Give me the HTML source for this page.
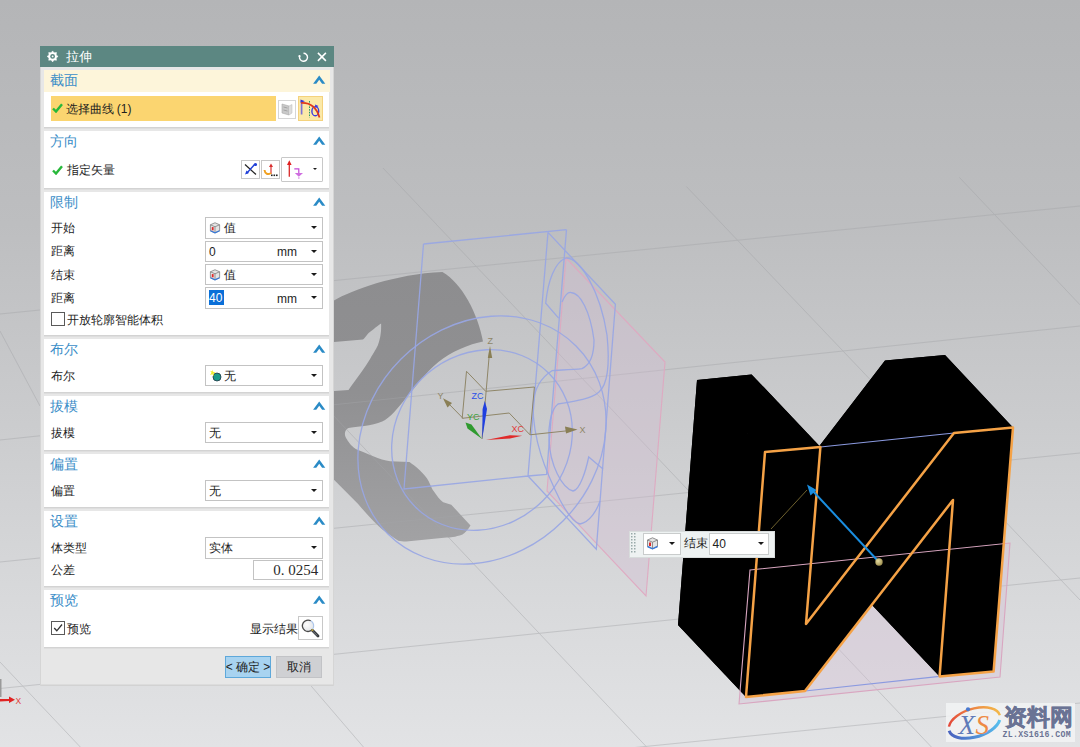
<!DOCTYPE html>
<html><head><meta charset="utf-8">
<style>
html,body{margin:0;padding:0;}
body{width:1080px;height:747px;position:relative;overflow:hidden;font-family:"Liberation Sans",sans-serif;
background:linear-gradient(180deg,#b4b5b7 0%,#bdbec0 30%,#cacbcd 55%,#d8d9db 80%,#e2e3e5 100%);}
.a{position:absolute;}
svg.scene{position:absolute;left:0;top:0;}
#dlg{position:absolute;left:40px;top:46px;width:294px;height:640px;background:#e7e7e7;box-shadow:inset 1px 0 0 #d5d5d5,inset -1px 0 0 #d5d5d5,inset 0 -1.5px 0 #d2d2d2;}
#title{position:absolute;left:0;top:0;width:294px;height:21px;background:#5c8782;}
.panel{position:absolute;left:4px;width:285.3px;background:#fff;box-shadow:0 1px 0 #d3d3d3,0 2px 0 #dedede;}
.hdr{position:absolute;left:6px;font-size:13.6px;line-height:16px;color:#3b8ec8;white-space:nowrap;}
.chev{position:absolute;left:269px;width:13px;height:9px;}
.lbl{position:absolute;left:7px;font-size:12px;line-height:14px;color:#1e1e1e;white-space:nowrap;}
.combo{position:absolute;left:161px;width:115.5px;height:19.4px;border:1px solid #c3c3c3;background:#fff;}
.arr{position:absolute;right:5px;top:8px;width:0;height:0;border-left:3px solid transparent;border-right:3px solid transparent;border-top:3.5px solid #1a1a1a;}
.ctext{position:absolute;font-size:12px;line-height:14px;color:#1e1e1e;white-space:nowrap;}
</style></head>
<body>
<svg class="scene" width="1080" height="747" viewBox="0 0 1080 747">
  <!-- gray shape -->
  <defs><linearGradient id="gg" x1="0" y1="270" x2="0" y2="542" gradientUnits="userSpaceOnUse"><stop offset="0" stop-color="#8d8d8f"/><stop offset="0.45" stop-color="#909092"/><stop offset="1" stop-color="#a2a2a4"/></linearGradient></defs>
  <path fill="url(#gg)" d="M320,302 L334,300.5 C352,290 395,274 442.4,272 C462,283 478,314 483,341.5 C470,344 450,352 438.4,362.1 C425,373 415,388 406.3,397.5 C398,408 390,418 382.2,421.6 C372,426 356,427 348.5,428 C344,430 344,436 346.9,439.2 C349,443 352,447 358,450 C366,453 380,460 390.2,461.3 L409.5,462.1 C415,466 425,474 428.8,481.4 C431,486 432,489 433.6,491 C437,496 440,500 443.2,502.3 L451.3,504.7 L470.5,525.6 C468,530 465,533 462.5,534.4 C455,537 450,537.5 446.5,537.6 L406.3,541.6 C403,541.5 400,541 398.3,540.8 C390,535 384,531 379,526.4 C370,518 364,511 358.1,503.9 L334,479.8 L320,468 L320,391 L334,391 L348.5,390 C355,381 366,366 370.2,358.8 C374,352 377,348 378.2,344.3 C380,339 381.4,333 381.1,323.4 C376,327 371,331 368.6,333 C366,336 364,339 363,339.6 L334,342 L320,342 Z"/>
  <!-- grid lines -->
  <g stroke="#a4a5a8" stroke-width="0.9" fill="none" opacity="0.5">
    <line x1="0" y1="314" x2="1080" y2="206"/>
    <line x1="0" y1="440" x2="1080" y2="326"/>
    <line x1="0" y1="562" x2="1080" y2="453"/>
    <line x1="0" y1="688.5" x2="1080" y2="578"/>
    <line x1="300" y1="781" x2="1080" y2="703"/>
    <line x1="383" y1="168" x2="938" y2="754"/>
    <line x1="205.3" y1="280" x2="651.4" y2="752"/>
    <line x1="0" y1="662" x2="85" y2="752"/>
    <line x1="686.4" y1="186.5" x2="1080" y2="600"/>
    <line x1="959.4" y1="177.4" x2="1080" y2="304.8"/>
    <line x1="0" y1="331" x2="40" y2="406"/>
    <line x1="300" y1="673" x2="366" y2="750"/>
  </g>
  <!-- pink plane (left) -->
  <path d="M566,258 L665,362 L646,596 L547,491 Z" fill="#d4bcd4" fill-opacity="0.36" stroke="#e0a6c0" stroke-width="1.1" stroke-opacity="0.9"/>
  <!-- blue wireframe -->
  <g stroke="#98a6e4" stroke-width="1.3" fill="none" stroke-opacity="0.92">
    <ellipse cx="482" cy="440" rx="133" ry="114.5" transform="rotate(-45 482 440)"/>
    <ellipse cx="482" cy="440" rx="94.5" ry="86" transform="rotate(-45 482 440)"/>
    <path d="M423.5,244 L566.5,229.6 M423.5,244 L404,489 L528,476 L546.6,474.5 L566.5,229.6 M548,232.4 L528,476 M548,232.4 L615.4,304.3 L596.3,549.2 L528,476"/>
    <path d="M558.6,318.2 L545.7,303.2 C548,280 555,262 566,258 C580,258 600,290 607,335 C610,365 607,385 599,392 C590,400 570,402 558,404 C550,410 548,430 549,440 C550,465 562,488 573,491 C580,490 586,470 588.7,457 L603,469"/>
    <path d="M562,302 C565,295 568,292 571,292.5 C580,293 590,310 594,340 C594,355 590,365 582,368.6 C570,370 555,370 552,370.7 C540,378 534,390 533,405 C533,440 545,470 560,500 C568,515 575,523 580,524 C590,522 597,510 600,501"/>
  </g>
  <!-- CSYS -->
  <g stroke="#8f8668" stroke-width="1" fill="none">
    <path d="M485.7,391.3 L534.4,387 L530,434.8 M466.5,371.3 L485.7,391.3 M466.5,371.3 L462.2,418.3 L509.2,413 L530,434.8"/>
    <line x1="482" y1="439" x2="489.5" y2="352"/>
    <line x1="530" y1="434.8" x2="570" y2="430.5"/>
    <line x1="463" y1="418.3" x2="447" y2="402"/>
  </g>
  <g fill="#8a7f55">
    <path d="M490,346 L492.2,358 L487.8,358 Z"/>
    <path d="M577.5,429.6 L565,426.5 L566,433.5 Z"/>
    <path d="M443,398.3 L452,403 L447.5,407.5 Z"/>
  </g>
  <path d="M484.8,401 L487,409 L482.2,439 L482.6,409 Z" fill="#1f3fe0"/>
  <path d="M465.5,422.5 L471.5,424.5 L481.8,438.8 L467.5,428.5 Z" fill="#2f9a2f"/>
  <path d="M486,440 L510,435.2 L522.2,435.8 L510,438.6 Z" fill="#e02a2a"/>
  <g font-family="Liberation Sans, sans-serif" font-size="9">
    <text x="487.5" y="344" fill="#8f8668">Z</text>
    <text x="471.5" y="398.5" fill="#2a50e8">ZC</text>
    <text x="467" y="420" fill="#3ea33e">YC</text>
    <text x="511.5" y="431.5" fill="#e23a3a">XC</text>
    <text x="579.5" y="433" fill="#8f8668">X</text>
    <text x="437.5" y="399" fill="#8f8668">Y</text>
  </g>
  <!-- pink plane (right, fill behind N) -->
  <path d="M750,570 L1010,543 L1000,677 L739,704 Z" fill="#d6c0d6" fill-opacity="0.36"/>
  <!-- N solid -->
  <g fill="#000">
    <path d="M746,697 L765,452 L820.4,447 L806,624 L954,433 L1013,427.6 L993.6,671.6 L939.6,676.4 L953,500 L805,691 Z"/>
    <path d="M678,625 L697,380 L751.6,374.4 L738,552 L885,360.6 L945,355 L925.6,599.6 L871.6,604.4 L885,428 L737,619 Z"/>
    <path d="M746,697 L765,452 L697,380 L678,625 Z"/>
    <path d="M765,452 L820.4,447 L751.6,374.4 L697,380 Z"/>
    <path d="M820.4,447 L806,624 L738,552 L751.6,374.4 Z"/>
    <path d="M806,624 L954,433 L885,360.6 L738,552 Z"/>
    <path d="M954,433 L1013,427.6 L945,355 L885,360.6 Z"/>
    <path d="M1013,427.6 L993.6,671.6 L925.6,599.6 L945,355 Z"/>
    <path d="M993.6,671.6 L939.6,676.4 L871.6,604.4 L925.6,599.6 Z"/>
    <path d="M939.6,676.4 L953,500 L885,428 L871.6,604.4 Z"/>
    <path d="M953,500 L805,691 L737,619 L885,428 Z"/>
    <path d="M805,691 L746,697 L678,625 L737,619 Z"/>
  </g>
  <!-- N blue edges -->
  <g stroke="#8b9ae0" stroke-width="1.2" fill="none">
    <line x1="820.4" y1="447" x2="954" y2="433"/>
    <line x1="805" y1="691" x2="939.6" y2="676.4"/>
  </g>
  <!-- pink plane edges -->
  <path d="M750,570 L1010,543 L1000,677 L739,704 Z" fill="none" stroke="#d9a6c0" stroke-width="1.1"/>
  <!-- orange outline -->
  <path d="M746,697 L765,452 L820.4,447 L806,624 L954,433 L1013,427.6 L993.6,671.6 L939.6,676.4 L953,500 L805,691 Z" fill="none" stroke="#f5a246" stroke-width="2.5" stroke-linejoin="round"/>
  <!-- arrow -->
  <line x1="807" y1="490" x2="771" y2="529" stroke="#8a7a3a" stroke-width="0.8"/>
  <line x1="879" y1="562" x2="811" y2="489" stroke="#1a8ee0" stroke-width="2"/>
  <path d="M807,484.5 L816.5,490 L810.5,495.5 Z" fill="#1a8ee0"/>
  <defs><radialGradient id="bg1" cx="0.38" cy="0.35" r="0.7"><stop offset="0" stop-color="#e6dca0"/><stop offset="1" stop-color="#9c8c4c"/></radialGradient></defs><circle cx="879" cy="562" r="3.7" fill="url(#bg1)"/>
  <!-- small X axis bottom-left -->
  <rect x="0" y="679" width="1.5" height="18" fill="#9a9a9a"/>
  <path d="M0,699 L9,699 L9,696.5 L15,699.8 L9,703 L9,701 L0,701.5 Z" fill="#e02424"/>
  <text x="15.5" y="703.5" font-family="Liberation Sans, sans-serif" font-size="8.5" fill="#e04040">X</text>
</svg>

<!-- floating toolbar -->
<div class="a" style="left:629px;top:530.5px;width:145.5px;height:27px;background:#eef2f2;border:1px solid #d8dcdc;box-sizing:border-box;"></div>
<svg class="a" style="left:630px;top:532px" width="8" height="24"><g fill="#9aa"><rect x="1" y="1" width="1.5" height="1.5"/><rect x="4" y="1" width="1.5" height="1.5"/><rect x="1" y="4" width="1.5" height="1.5"/><rect x="4" y="4" width="1.5" height="1.5"/><rect x="1" y="7" width="1.5" height="1.5"/><rect x="4" y="7" width="1.5" height="1.5"/><rect x="1" y="10" width="1.5" height="1.5"/><rect x="4" y="10" width="1.5" height="1.5"/><rect x="1" y="13" width="1.5" height="1.5"/><rect x="4" y="13" width="1.5" height="1.5"/><rect x="1" y="16" width="1.5" height="1.5"/><rect x="4" y="16" width="1.5" height="1.5"/><rect x="1" y="19" width="1.5" height="1.5"/><rect x="4" y="19" width="1.5" height="1.5"/></g></svg>
<div class="a" style="left:643px;top:533px;width:38px;height:21.5px;background:#fff;border:1px solid #c9cccc;box-sizing:border-box;"></div>
<div class="a" style="left:668.5px;top:541.5px;width:0;height:0;border-left:3px solid transparent;border-right:3px solid transparent;border-top:3.5px solid #1a1a1a;"></div>
<div class="a" style="left:683.5px;top:536px;font-size:12px;line-height:14px;color:#222;">结束</div>
<div class="a" style="left:708.5px;top:533px;width:60.5px;height:21.5px;background:#fff;border:1px solid #c9cccc;box-sizing:border-box;"></div>
<div class="a" style="left:712.5px;top:536.5px;font-size:12px;line-height:14px;color:#222;">40</div>
<div class="a" style="left:758px;top:541.5px;width:0;height:0;border-left:3px solid transparent;border-right:3px solid transparent;border-top:3.5px solid #1a1a1a;"></div>
<svg class="a" style="left:646px;top:537px" width="13" height="13" viewBox="0 0 13 13">
  <path d="M6.5,0.8 L11.5,3 L11.5,9.5 L6.5,11.8 L1.5,9.5 L1.5,3 Z" fill="#e4e4e4" stroke="#777" stroke-width="0.8"/>
  <path d="M1.5,3 L6.5,5.2 L11.5,3 M6.5,5.2 L6.5,11.8" fill="none" stroke="#777" stroke-width="0.8"/>
  <path d="M1.5,9.5 L6.5,11.8 L11.5,9.5" fill="none" stroke="#3a7ad8" stroke-width="1.4"/>
  <rect x="3" y="5.5" width="2" height="3.5" fill="#e02a2a"/>
</svg>

<!-- watermark -->
<div class="a" style="left:946px;top:703px;width:129px;height:39px;background:rgba(242,243,245,0.85);"></div>
<svg class="a" style="left:946px;top:703px" width="130" height="40" viewBox="0 0 130 40">
  <defs>
    <linearGradient id="wo" x1="0" y1="0" x2="1" y2="0"><stop offset="0" stop-color="#e4483a"/><stop offset="1" stop-color="#f3b84a"/></linearGradient>
    <linearGradient id="wb" x1="0" y1="0" x2="1" y2="0"><stop offset="0" stop-color="#4a64c0"/><stop offset="1" stop-color="#58c0ee"/></linearGradient>
  </defs>
  <g transform="translate(28.5 20) rotate(-17)">
    <path d="M-25.5,-4 A26.5,14 0 0 1 26.5,0" fill="none" stroke="url(#wo)" stroke-width="2.4"/>
    <path d="M-26.5,0 A26.5,14 0 0 0 25,4.5" fill="none" stroke="url(#wb)" stroke-width="3"/>
  </g>
  <text x="12.5" y="30.5" font-family="Liberation Serif, serif" font-style="italic" font-size="27" fill="#5f7ab8">X</text>
  <text x="29.5" y="30.5" font-family="Liberation Serif, serif" font-style="italic" font-size="27" fill="#ee8a44">S</text>
  <circle cx="22" cy="6.3" r="2.1" fill="#4a7ad0"/>
  <text x="57.5" y="22" font-size="23" font-weight="bold" fill="#6a7394" stroke="#6a7394" stroke-width="0.5" font-family="Liberation Sans, sans-serif">资料网</text>
  <text x="56.5" y="34" font-size="8.2" font-weight="bold" fill="#6a7394" font-family="Liberation Mono, monospace" letter-spacing="0.35">ZL.XS1616.COM</text>
</svg>

<!-- dialog -->
<div id="dlg">
  <div id="title">
    <svg class="a" style="left:6px;top:4px" width="14" height="14" viewBox="0 0 14 14">
      <polygon points="6.60,0.90 8.09,2.80 10.49,2.51 10.20,4.91 12.10,6.40 10.20,7.89 10.49,10.29 8.09,10.00 6.60,11.90 5.11,10.00 2.71,10.29 3.00,7.89 1.10,6.40 3.00,4.91 2.71,2.51 5.11,2.80" fill="#fff" stroke="#fff" stroke-width="0.5" stroke-linejoin="round"/>
      <circle cx="6.6" cy="6.4" r="2.4" fill="#5c8782"/>
      <circle cx="6.6" cy="6.4" r="0.9" fill="#fff"/>
    </svg>
    <div class="a" style="left:26px;top:3px;font-size:13px;line-height:15px;color:#fff;">拉伸</div>
    <svg class="a" style="left:257px;top:5px" width="12" height="12" viewBox="0 0 12 12">
      <path d="M6.5,2.3 A4,4 0 1 1 2.56,5.61" fill="none" stroke="#fff" stroke-width="1.4"/>
      <circle cx="2.5" cy="5.2" r="1.15" fill="#fff"/>
    </svg>
    <svg class="a" style="left:276.5px;top:6px" width="10" height="10" viewBox="0 0 10 10">
      <path d="M0.9,0.9 L8.9,8.9 M8.9,0.9 L0.9,8.9" stroke="#fff" stroke-width="1.5"/>
    </svg>
  </div>

  <!-- P1 截面 -->
  <div class="panel" style="top:24px;height:56.5px;">
    <div class="a" style="left:0;top:0;width:285.5px;height:22px;background:#fdf5da;"></div>
    <div class="hdr" style="top:3px;">截面</div>
    <svg class="chev" style="top:5.2px" viewBox="0 0 13 9"><path d="M6.2,0.6 L12.3,8.7 L9.1,8.7 L6.2,4.7 L3.3,8.7 L0.1,8.7 Z" fill="#2a8bc6"/></svg>
    <div class="a" style="left:7px;top:26px;width:225px;height:25px;background:#fbd570;"></div>
    <svg class="a" style="left:8px;top:33px" width="11" height="10" viewBox="0 0 11 10"><path d="M1,5.5 L4,8.5 L10,1.2" fill="none" stroke="#27b83a" stroke-width="2.4"/></svg>
    <div class="ctext" style="left:21.5px;top:31.5px;">选择曲线 (1)</div>
    <div class="a" style="left:233.5px;top:30px;width:18.5px;height:19px;background:#fff;border:1px solid #d6d6d6;box-sizing:border-box;"></div>
    <svg class="a" style="left:237px;top:33px" width="12" height="13" viewBox="0 0 12 13"><path d="M1,1 L8,3 L8,12 L1,10 Z" fill="#c9c9c9" stroke="#aaa" stroke-width="0.6"/><path d="M2.5,4 L6.5,5 M2.5,7 L6.5,8" stroke="#999" stroke-width="0.8"/><path d="M8,3 L11,1.5 L11,10 L8,12" fill="#ddd" stroke="#bbb" stroke-width="0.5"/></svg>
    <div class="a" style="left:254px;top:26px;width:25px;height:25px;background:#fbe9a8;border:1px solid #f4d27d;box-sizing:border-box;"></div>
    <svg class="a" style="left:255px;top:27px" width="23" height="23" viewBox="0 0 23 23">
      <line x1="2.6" y1="4" x2="2.6" y2="17.5" stroke="#7d72d6" stroke-width="1.7"/>
      <path d="M1.5,2.5 L6,4.2 L1.5,5.8 Z" fill="#3434d8"/>
      <line x1="10.5" y1="4" x2="10.5" y2="20.5" stroke="#2a9a6a" stroke-width="1" stroke-dasharray="1.6 1.1"/>
      <ellipse cx="16.3" cy="14.2" rx="3.4" ry="4.6" fill="none" stroke="#3a3ae0" stroke-width="1.4"/>
      <path d="M16,7.5 L19.5,9 L16.5,11 Z" fill="#3a3ae0"/>
      <path d="M2,6 C10,5.5 17,9 20.5,20.5" fill="none" stroke="#e0381a" stroke-width="1.7"/>
    </svg>
  </div>

  <!-- P2 方向 -->
  <div class="panel" style="top:84.5px;height:57px;">
    <div class="hdr" style="top:3px;">方向</div>
    <svg class="chev" style="top:5.2px" viewBox="0 0 13 9"><path d="M6.2,0.6 L12.3,8.7 L9.1,8.7 L6.2,4.7 L3.3,8.7 L0.1,8.7 Z" fill="#2a8bc6"/></svg>
    <svg class="a" style="left:8px;top:34px" width="11" height="10" viewBox="0 0 11 10"><path d="M1,5.5 L4,8.5 L10,1.2" fill="none" stroke="#27b83a" stroke-width="2.4"/></svg>
    <div class="lbl" style="left:22.5px;top:32.5px;">指定矢量</div>
    <div class="a" style="left:197px;top:29.5px;width:19px;height:18.5px;background:#fff;border:1px solid #c8c8c8;box-sizing:border-box;"></div>
    <svg class="a" style="left:198px;top:30.5px" width="17" height="17" viewBox="0 0 17 17"><path d="M3,3.5 L14,13.5" stroke="#222" stroke-width="1.2"/><path d="M13,3 L4.5,12.5" stroke="#1f3fd8" stroke-width="1.4"/><circle cx="13.5" cy="3.5" r="1.6" fill="#1f3fd8"/><path d="M3,13.5 L4.5,9.5 L7,12 Z" fill="#1f3fd8"/></svg>
    <div class="a" style="left:217px;top:29.5px;width:19px;height:18.5px;background:#fff;border:1px solid #c8c8c8;box-sizing:border-box;"></div>
    <svg class="a" style="left:218px;top:30.5px" width="17" height="17" viewBox="0 0 17 17"><path d="M9,13 L9,5" stroke="#d83030" stroke-width="1.2"/><path d="M9,2.5 L11,6 L7,6 Z" fill="#d83030"/><path d="M2.5,9 C3,13 6,14 9,12" fill="none" stroke="#f0a020" stroke-width="2"/><rect x="9" y="13.5" width="1.6" height="1.6" fill="#222"/><rect x="11.5" y="13.5" width="1.6" height="1.6" fill="#222"/><rect x="14" y="13.5" width="1.6" height="1.6" fill="#222"/></svg>
    <div class="a" style="left:237px;top:26.5px;width:41.5px;height:24.5px;background:#fff;border:1px solid #c8c8c8;border-radius:1px;box-sizing:border-box;"></div>
    <svg class="a" style="left:238px;top:29px" width="24" height="20" viewBox="0 0 24 20"><path d="M7.3,16.8 L7.3,4" stroke="#d82a2a" stroke-width="1.3"/><path d="M7.3,0.3 L9.6,5 L5,5 Z" fill="#e02020"/><path d="M12.3,8.8 L16.8,8.8 L16.8,13" fill="none" stroke="#c44ad6" stroke-width="1.2"/><path d="M12.8,13 L21,13 L16.8,16.8 Z" fill="#cf6ee0"/><rect x="16" y="17.5" width="1.6" height="1" fill="#cf6ee0"/></svg>
    <div class="a" style="left:268.6px;top:37.5px;width:0;height:0;border-left:2.3px solid transparent;border-right:2.3px solid transparent;border-top:2.6px solid #1a1a1a;"></div>
  </div>

  <!-- P3 限制 -->
  <div class="panel" style="top:145.5px;height:143px;">
    <div class="hdr" style="top:3px;">限制</div>
    <svg class="chev" style="top:5.2px" viewBox="0 0 13 9"><path d="M6.2,0.6 L12.3,8.7 L9.1,8.7 L6.2,4.7 L3.3,8.7 L0.1,8.7 Z" fill="#2a8bc6"/></svg>
    <div class="lbl" style="top:29.5px;">开始</div>
    <div class="combo" style="top:25.7px;"><svg class="a" style="left:3px;top:4px" width="12" height="12" viewBox="0 0 13 13"><path d="M6.5,0.8 L11.5,3 L11.5,9.5 L6.5,11.8 L1.5,9.5 L1.5,3 Z" fill="#e4e4e4" stroke="#777" stroke-width="0.8"/><path d="M1.5,3 L6.5,5.2 L11.5,3 M6.5,5.2 L6.5,11.8" fill="none" stroke="#777" stroke-width="0.8"/><path d="M1.5,9.5 L6.5,11.8 L11.5,9.5" fill="none" stroke="#3a7ad8" stroke-width="1.4"/><rect x="3" y="5.5" width="2" height="3.5" fill="#e02a2a"/></svg><div class="ctext" style="left:18px;top:3px;">值</div><div class="arr"></div></div>
    <div class="lbl" style="top:52.5px;">距离</div>
    <div class="combo" style="top:49px;"><div class="ctext" style="left:3px;top:3px;">0</div><div class="ctext" style="left:71px;top:3.5px;">mm</div><div class="arr"></div></div>
    <div class="lbl" style="top:76px;">结束</div>
    <div class="combo" style="top:72.5px;"><svg class="a" style="left:3px;top:4px" width="12" height="12" viewBox="0 0 13 13"><path d="M6.5,0.8 L11.5,3 L11.5,9.5 L6.5,11.8 L1.5,9.5 L1.5,3 Z" fill="#e4e4e4" stroke="#777" stroke-width="0.8"/><path d="M1.5,3 L6.5,5.2 L11.5,3 M6.5,5.2 L6.5,11.8" fill="none" stroke="#777" stroke-width="0.8"/><path d="M1.5,9.5 L6.5,11.8 L11.5,9.5" fill="none" stroke="#3a7ad8" stroke-width="1.4"/><rect x="3" y="5.5" width="2" height="3.5" fill="#e02a2a"/></svg><div class="ctext" style="left:18px;top:3px;">值</div><div class="arr"></div></div>
    <div class="lbl" style="top:99.5px;">距离</div>
    <div class="combo" style="top:95.7px;"><div class="a" style="left:3px;top:1.5px;width:14.5px;height:15.5px;background:#0a6fd8;"></div><div class="ctext" style="left:3px;top:3px;color:#fff;">40</div><div class="ctext" style="left:71px;top:3.5px;">mm</div><div class="arr"></div></div>
    <div class="a" style="left:7px;top:120.8px;width:12px;height:12px;border:1px solid #5a5a5a;background:#fff;"></div>
    <div class="lbl" style="left:22.5px;top:121.5px;">开放轮廓智能体积</div>
  </div>

  <!-- P4 布尔 -->
  <div class="panel" style="top:292.5px;height:53.5px;">
    <div class="hdr" style="top:3px;">布尔</div>
    <svg class="chev" style="top:5.2px" viewBox="0 0 13 9"><path d="M6.2,0.6 L12.3,8.7 L9.1,8.7 L6.2,4.7 L3.3,8.7 L0.1,8.7 Z" fill="#2a8bc6"/></svg>
    <div class="lbl" style="top:30px;">布尔</div>
    <div class="combo" style="top:26px;"><svg class="a" style="left:3px;top:3px" width="14" height="14" viewBox="0 0 14 14"><circle cx="8" cy="8" r="4" fill="#1a9a8a" stroke="#234" stroke-width="0.8"/><path d="M3.5,0.5 L4.3,3 L7,3.5 L4.6,4.6 L5,7.3 L3.4,5.2 L1,6 L2.5,3.8 L1.2,1.8 L3.3,2.5 Z" fill="#f2ee30"/></svg><div class="ctext" style="left:18px;top:3px;">无</div><div class="arr"></div></div>
  </div>

  <!-- P5 拔模 -->
  <div class="panel" style="top:350px;height:53.5px;">
    <div class="hdr" style="top:3px;">拔模</div>
    <svg class="chev" style="top:5.2px" viewBox="0 0 13 9"><path d="M6.2,0.6 L12.3,8.7 L9.1,8.7 L6.2,4.7 L3.3,8.7 L0.1,8.7 Z" fill="#2a8bc6"/></svg>
    <div class="lbl" style="top:30px;">拔模</div>
    <div class="combo" style="top:26px;"><div class="ctext" style="left:3px;top:3px;">无</div><div class="arr"></div></div>
  </div>

  <!-- P6 偏置 -->
  <div class="panel" style="top:407.5px;height:53.5px;">
    <div class="hdr" style="top:3px;">偏置</div>
    <svg class="chev" style="top:5.2px" viewBox="0 0 13 9"><path d="M6.2,0.6 L12.3,8.7 L9.1,8.7 L6.2,4.7 L3.3,8.7 L0.1,8.7 Z" fill="#2a8bc6"/></svg>
    <div class="lbl" style="top:30px;">偏置</div>
    <div class="combo" style="top:26px;"><div class="ctext" style="left:3px;top:3px;">无</div><div class="arr"></div></div>
  </div>

  <!-- P7 设置 -->
  <div class="panel" style="top:465px;height:75px;">
    <div class="hdr" style="top:3px;">设置</div>
    <svg class="chev" style="top:5.2px" viewBox="0 0 13 9"><path d="M6.2,0.6 L12.3,8.7 L9.1,8.7 L6.2,4.7 L3.3,8.7 L0.1,8.7 Z" fill="#2a8bc6"/></svg>
    <div class="lbl" style="top:30px;">体类型</div>
    <div class="combo" style="top:26.4px;"><div class="ctext" style="left:3px;top:3px;">实体</div><div class="arr"></div></div>
    <div class="lbl" style="top:52px;">公差</div>
    <div class="a" style="left:209px;top:49.4px;width:69.5px;height:19.5px;background:#fff;border:1px solid #c3c3c3;box-sizing:border-box;"></div>
    <div class="a" style="left:209px;top:50.6px;width:65.3px;text-align:right;font-family:'Liberation Serif',serif;font-size:15px;line-height:17px;color:#2a2a2a;white-space:nowrap;">0.&nbsp;0254</div>
  </div>

  <!-- P8 预览 -->
  <div class="panel" style="top:544px;height:57px;">
    <div class="hdr" style="top:3px;">预览</div>
    <svg class="chev" style="top:5.2px" viewBox="0 0 13 9"><path d="M6.2,0.6 L12.3,8.7 L9.1,8.7 L6.2,4.7 L3.3,8.7 L0.1,8.7 Z" fill="#2a8bc6"/></svg>
    <div class="a" style="left:7px;top:31px;width:12px;height:12px;border:1px solid #5a5a5a;background:#fff;"></div>
    <svg class="a" style="left:8px;top:32px" width="12" height="12" viewBox="0 0 12 12"><path d="M2.2,6 L4.8,8.8 L10,2.5" fill="none" stroke="#333" stroke-width="1.3"/></svg>
    <div class="lbl" style="left:23px;top:31.5px;">预览</div>
    <div class="lbl" style="left:206px;top:32px;">显示结果</div>
    <div class="a" style="left:254px;top:72px;"></div>
    <div class="a" style="left:254px;top:26.4px;width:24.5px;height:24px;background:#fff;border:1px solid #c8c8c8;box-sizing:border-box;"></div>
    <svg class="a" style="left:256px;top:28px" width="21" height="21" viewBox="0 0 21 21"><defs><radialGradient id="lg" cx="0.4" cy="0.4" r="0.7"><stop offset="0" stop-color="#fdfdfd"/><stop offset="1" stop-color="#dfe2e6"/></radialGradient></defs><circle cx="7.9" cy="7.7" r="5.7" fill="url(#lg)"/><path d="M10.8,2.8 A5.7,5.7 0 1 0 12.6,11.2" fill="none" stroke="#4a4a4a" stroke-width="1.3"/><path d="M10.8,2.8 A5.7,5.7 0 0 1 12.6,11.2" fill="none" stroke="#a9c4ea" stroke-width="1.1"/><path d="M12.6,12.6 L18,18" stroke="#33363a" stroke-width="2.8" stroke-linecap="round"/><path d="M13.2,13.6 L17.4,17.6" stroke="#9aa0a8" stroke-width="0.7"/><circle cx="12.4" cy="12.2" r="1.1" fill="#b8a040"/></svg>
  </div>

  <!-- buttons -->
  <div class="a" style="left:185px;top:610px;width:46px;height:21.5px;background:#a8d3f0;border:1px solid #5ea8da;box-sizing:border-box;"></div>
  <div class="a" style="left:185px;top:613.5px;width:46px;text-align:center;font-size:12px;line-height:14px;color:#222;">&lt; 确定 &gt;</div>
  <div class="a" style="left:235.5px;top:610px;width:46px;height:21.5px;background:#cfd0d3;border:1px solid #c2c3c6;box-sizing:border-box;"></div>
  <div class="a" style="left:235.5px;top:613.5px;width:46px;text-align:center;font-size:12px;line-height:14px;color:#222;">取消</div>
</div>
</body></html>
